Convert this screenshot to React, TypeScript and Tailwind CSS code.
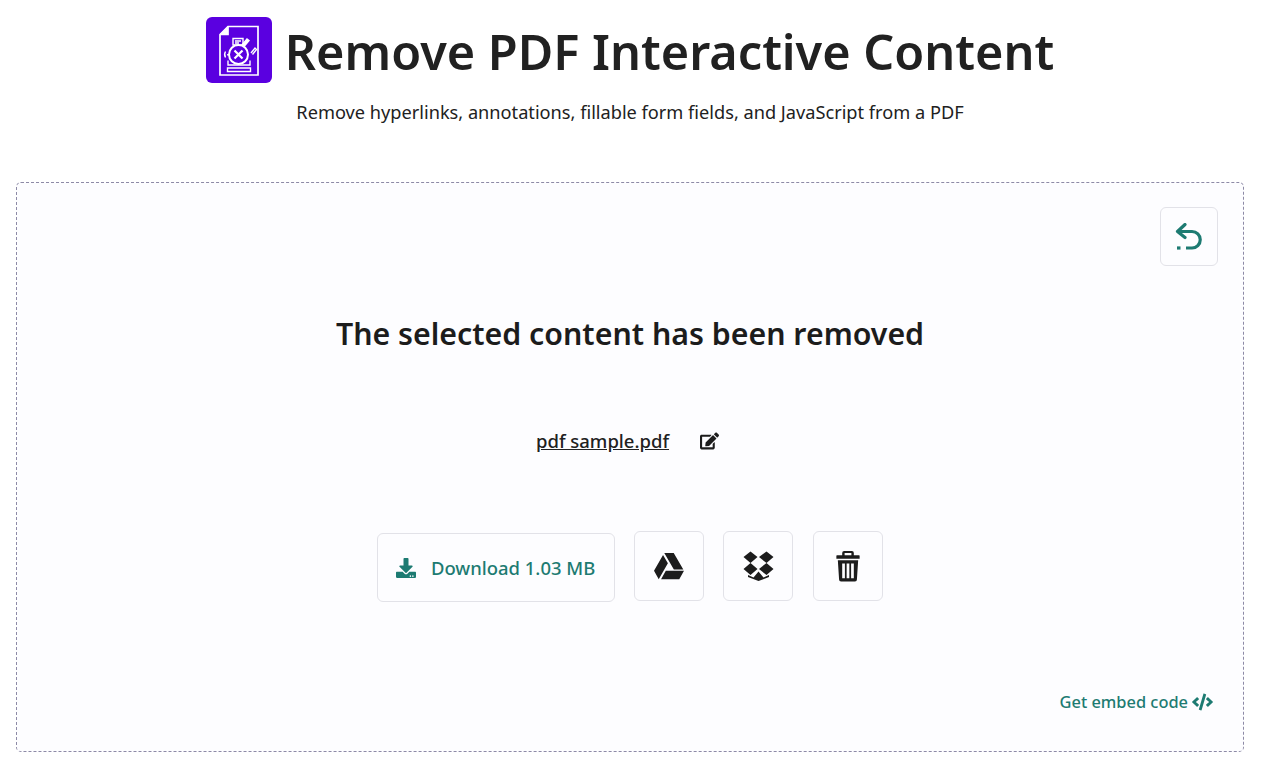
import { FaCode, FaDownload, FaEdit, FaGoogleDrive } from 'react-icons/fa';

function LogoIcon() {
  return (
    <svg viewBox="0 0 66 66" className="h-[66px] w-[66px]">
      <rect width="66" height="66" rx="6" fill="#5a00e0" />
      <g fill="none" stroke="#fff" strokeWidth="1.400">
        <path d="M22 9.500H52V58H14V17.500Z" strokeWidth="1.700" />
        <path d="M22 9.500V17.500H14" fill="#fff" strokeWidth="1.700" />
        <path d="M27 21.500h10v6.500h-10z" />
        <path d="M29 24h6M29 26h4" />
        <path d="M36 28l5-6 2 1.500-5 6" fill="#fff" />
        <path d="M45 36l4-5 1.500 1.500-4 5" />
        <path d="M19.500 34.500c-1.200 2-1.200 4 0 6" />
        <path d="M22 37v1.500" strokeWidth="1.800" />
        <circle cx="32.500" cy="37.500" r="9.500" strokeWidth="2" />
        <path d="M28.500 33.500l8 8M36.500 33.500l-8 8" strokeWidth="2.200" />
        <path d="M22 43.500v4.500h22v-4.500M21.500 51h23v3.500h-23z" />
      </g>
    </svg>
  );
}

function BackIcon() {
  return (
    <svg viewBox="0 0 28 28" className="h-[28px] w-[28px]" fill="none" stroke="#1d7b72" strokeWidth="3.200">
      <path d="M10 1.500L2.500 8.500l7.500 6" strokeLinecap="round" strokeLinejoin="round" />
      <path d="M3.500 8.500H17a8 8 0 0 1 0 16.500h-6" />
      <path d="M2 25h3.500" />
    </svg>
  );
}

function DropboxIcon() {
  return (
    <svg viewBox="0 0 31 30" className="h-[30px] w-[31px]" fill="#1c1c1c">
      <path d="M0.500 6L7.500 0.500 14.500 6 7.500 12ZM16 6L23.500 0.500 30.500 6 23.500 12ZM0.500 18L7.500 12 14.500 18 7.500 24ZM16 18L23.500 12 30.500 18 23.500 24Z" />
      <path d="M5 24L10.500 26.500 15.500 20.500 20.500 26.500 26 24V26L15.500 30 5 26Z" />
    </svg>
  );
}

function TrashIcon() {
  return (
    <svg viewBox="0 0 24 32" className="h-[31px] w-6" fill="#1c1c1c">
      <path d="M8 0h8a2 2 0 0 1 2 2v2.500h5.500a.5.5 0 0 1 .5.500v3H0V5a.5.5 0 0 1 .5-.5H6V2a2 2 0 0 1 2-2zm.5 2v2.500h7V2z" fillRule="evenodd" />
      <path d="M1.500 9.500h21l-1.300 20a2 2 0 0 1-2 2H4.800a2 2 0 0 1-2-2zM6 13v15h2.800V13zm4.600 0v15h2.800V13zm4.600 0v15H18V13z" fillRule="evenodd" />
    </svg>
  );
}

export default function App() {
  return (
    <div className="min-h-[763px] w-[1260px] bg-white font-['Noto_Sans',sans-serif] text-[#1c1c1c]">
      <header className="flex flex-col items-center pt-[17px]">
        <div className="flex items-center gap-[13px]">
          <LogoIcon />
          <h1 className="pt-[3px] text-[48.600px] font-semibold leading-[63px] text-[#212121]">Remove PDF Interactive Content</h1>
        </div>
        <p className="mt-[14px] text-[18.200px] leading-[30px] text-[#212121]">Remove hyperlinks, annotations, fillable form fields, and JavaScript from a PDF</p>
      </header>

      <main className="mx-4 mt-[55px] flex h-[570px] flex-col rounded-[5px] border border-dashed border-[#8d8aa6] bg-[#fdfdff] px-[25px] pt-6">
        <div className="flex justify-end">
          <button className="flex h-[59px] w-[58px] items-center justify-center rounded-md border border-[#e2e2e8]">
            <BackIcon />
          </button>
        </div>

        <h2 className="mt-[46px] text-center text-[30.300px] font-semibold leading-[44px]">The selected content has been removed</h2>

        <div className="mt-[71px] flex items-center justify-center gap-[31px] pr-[5px]">
          <a className="text-[18.500px] font-medium leading-[28px] text-[#212121] underline">pdf sample.pdf</a>
          <FaEdit className="h-[18px] w-[19px]" />
        </div>

        <div className="mt-[76px] flex items-start justify-center gap-[19px]">
          <button className="mt-[2px] flex h-[69px] w-[238px] items-center gap-[15px] rounded-md border border-[#e2e2e8] pl-[18px] text-[18.450px] font-medium text-[#1d7b72]">
            <FaDownload className="h-5 w-5" />
            Download 1.03 MB
          </button>
          <button className="flex h-[70px] w-[70px] items-center justify-center rounded-md border border-[#e2e2e8]">
            <FaGoogleDrive className="h-[30px] w-[30px]" />
          </button>
          <button className="flex h-[70px] w-[70px] items-center justify-center rounded-md border border-[#e2e2e8]">
            <DropboxIcon />
          </button>
          <button className="ml-px flex h-[70px] w-[70px] items-center justify-center rounded-md border border-[#e2e2e8]">
            <TrashIcon />
          </button>
        </div>

        <div className="mt-[88px] flex items-center justify-end gap-1 pr-[5px] text-[16.400px] font-medium text-[#1d7b72]">
          Get embed code
          <FaCode className="h-[20px] w-[21px]" />
        </div>
      </main>
    </div>
  );
}
